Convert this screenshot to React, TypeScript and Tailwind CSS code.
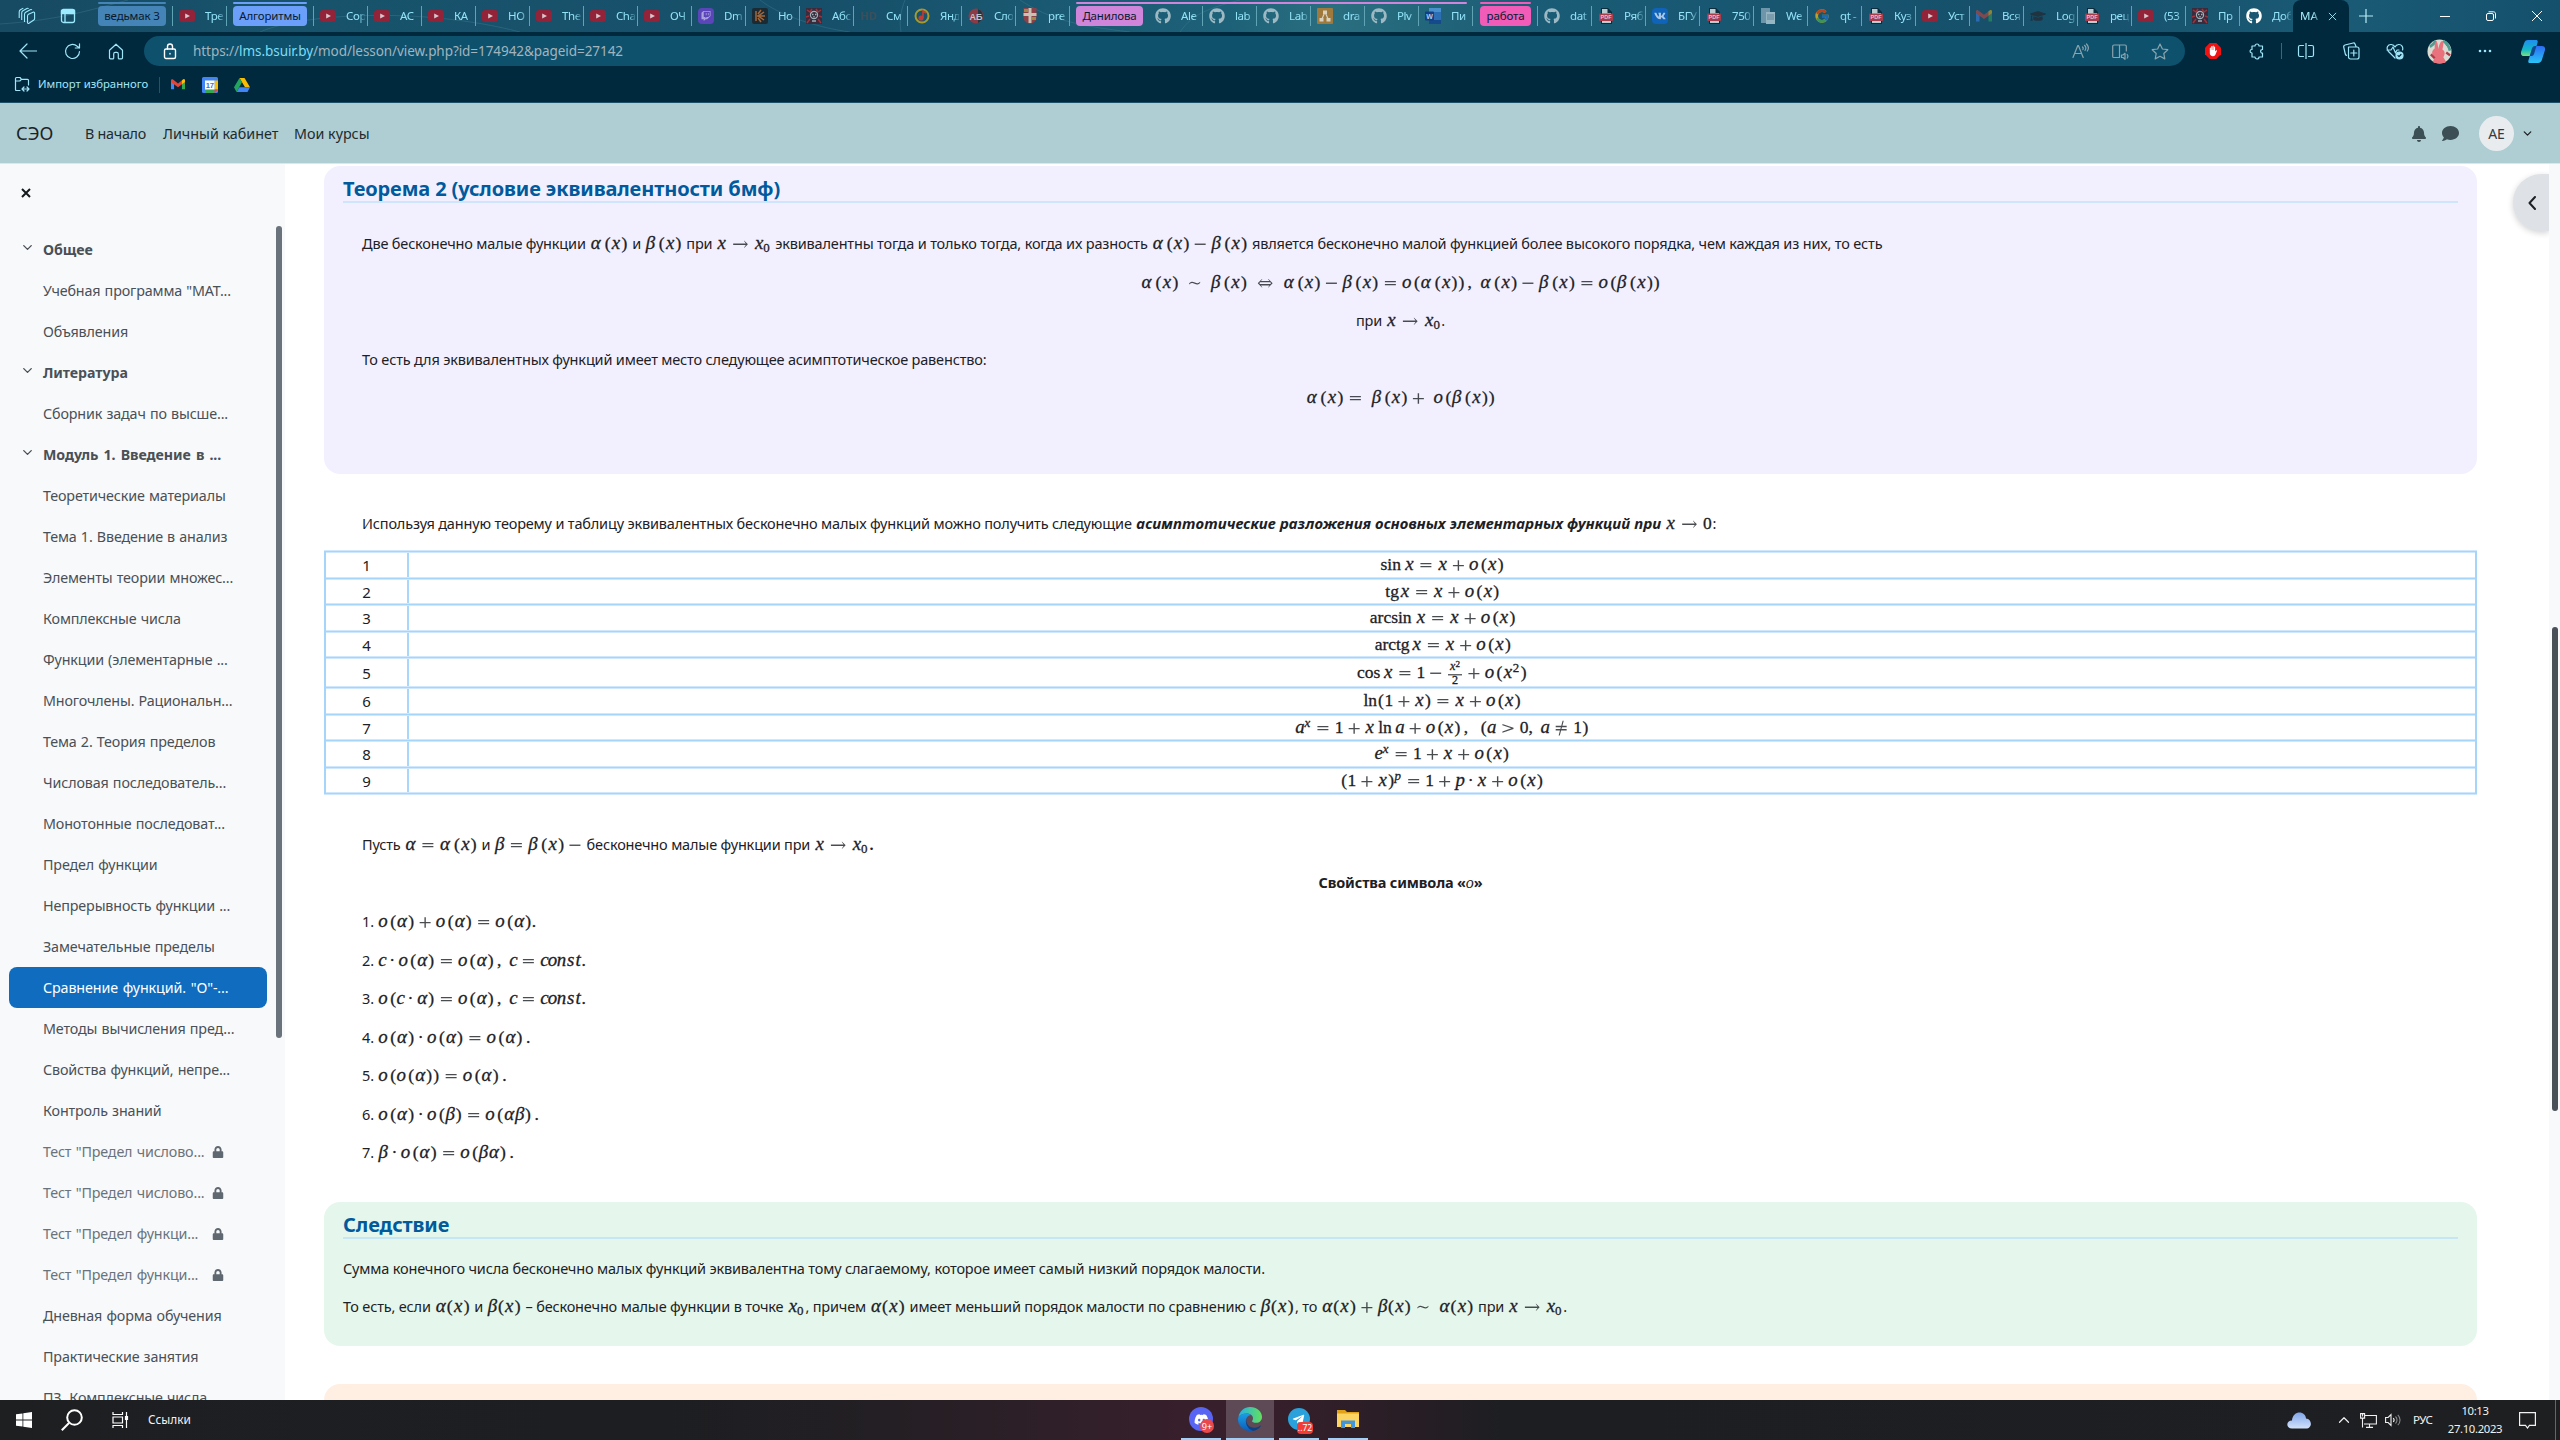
import React from "react";
import type { ReactNode } from "react";
import { FaGithub, FaTwitch, FaVk, FaDiscord, FaTelegramPlane, FaBell, FaComment, FaLock, FaGraduationCap } from "react-icons/fa";
import { FcGoogle } from "react-icons/fc";
import { ChevronDown, ChevronLeft, ChevronUp } from "lucide-react";

/* ---------- Math typesetting ---------- */

const SERIF = "font-['Liberation_Serif'] [-webkit-text-stroke:0.3px_currentColor]";
const SYM = "font-['DejaVu_Math_TeX_Gyre','DejaVu_Sans_Light','DejaVu_Sans'] leading-none opacity-80";

const GLYPHS: Record<string, [string, string]> = {
  "α": ["α", "w-[0.64em] italic"],
  "β": ["β", "w-[0.566em] italic"],
  x: ["x", "w-[0.572em] italic"],
  o: ["o", "w-[0.485em] italic"],
  c: ["c", "w-[0.433em] italic"],
  a: ["a", "w-[0.529em] italic"],
  e: ["e", "w-[0.466em] italic"],
  p: ["p", "w-[0.503em] italic"],
  n: ["n", "w-[0.6em] italic"],
  s: ["s", "w-[0.469em] italic"],
  t: ["t", "w-[0.361em] italic"],
  "0": ["0", "w-[0.5em]"],
  "1": ["1", "w-[0.5em]"],
  "2": ["2", "w-[0.5em]"],
  "(": ["(", "w-[0.389em]"],
  ")": [")", "w-[0.389em]"],
  ",": [",", "w-[0.445em] text-left"],
  ".": [".", "w-[0.278em]"],
  _: ["", "w-[0.167em]"],
  " ": ["", "w-[0.25em]"],
  "·": ["·", "w-[0.722em]"],
  sin: ["sin", "w-[1.395em] pr-[0.167em]"],
  arcsin: ["arcsin", "w-[2.731em] pr-[0.167em]"],
  cos: ["cos", "w-[1.505em] pr-[0.167em]"],
  ln: ["ln", "w-[0.834em]"],
  tg: ["tg", "w-[0.889em]"],
  arctg: ["arctg", "w-[2.225em]"],
};

const RELATIONS: Record<string, [string, string]> = {
  "=": ["=", "w-[1.334em]"],
  "+": ["+", "w-[1.222em]"],
  "−": ["−", "w-[1.222em]"],
  "→": ["→", "w-[1.556em]"],
  "⇔": ["⇔", "w-[1.556em]"],
  "~": ["∼", "w-[1.334em]"],
  ">": [">", "w-[1.334em]"],
  "≠": ["≠", "w-[1.334em]"],
};

const TOKEN = /arcsin|arctg|sin|cos|ln|tg|\^.|FRAC|x0|./gu;

function M({ t }: { t: string }) {
  return (
    <span className={`mx-[0.8px] inline-block text-[17.5px] leading-none font-normal tracking-normal whitespace-nowrap not-italic ${SERIF}`}>
      {(t.match(TOKEN) ?? []).map((k, i) => {
        if (k === "x0")
          return (
            <span key={i} className="inline-block w-[0.96em] pl-[0.05em] italic">
              <span className="text-[1.08em]">x</span><span className="relative top-[0.2em] text-[0.74em] not-italic">0</span>
            </span>
          );
        if (k === "FRAC")
          return (
            <span key={i} className="mx-[0.1em] inline-flex h-[1em] w-[0.84em] translate-y-[0.02em] flex-col items-center justify-center align-middle text-[16px]">
              <span className="text-[0.76em] leading-[0.95em] italic">x<span className="relative -top-[0.3em] text-[0.75em] not-italic">2</span></span>
              <span className="h-px w-full shrink-0 bg-current" />
              <span className="text-[0.76em] leading-[0.95em]">2</span>
            </span>
          );
        if (k[0] === "^")
          return (
            <span key={i} className={`relative -top-[0.45em] inline-block pr-[0.08em] text-[0.74em] ${k[1] === "2" ? "" : "italic"}`}>{k[1]}</span>
          );
        const r = RELATIONS[k];
        if (r)
          return (
            <span key={i} className={`inline-block text-center ${r[1]}`}>
              <span className={`[-webkit-text-stroke:0] ${SYM}`}>{r[0]}</span>
            </span>
          );
        const g = GLYPHS[k] ?? [k, ""];
        return (
          <span key={i} className={`inline-block text-center ${g[1]}`}>
            <span className={g[1].endsWith("italic") ? "text-[1.08em] leading-none" : ""}>{g[0]}</span>
          </span>
        );
      })}
    </span>
  );
}

/* ---------- Browser tabs ---------- */

const YouTube = () => (
  <svg viewBox="0 0 16 12" className="h-3 w-4"><rect width="16" height="12" rx="3" fill="#922338" /><path d="M6.2 3.4 11 6l-4.8 2.6z" fill="#d9c7cc" /></svg>
);
const Pdf = () => (
  <svg viewBox="0 0 16 16" className="size-4"><path d="M3 0h7l4 4v12H3z" fill="#0d2c3c" /><path d="M4 1h5.500v4H13v1H4zM4 13h9v2H4z" fill="#b9ccd2" /><rect x="1" y="5.500" width="14" height="7.500" rx="1" fill="#a83c4a" /><text x="8" y="11.300" textAnchor="middle" fontSize="5.500" fontWeight="700" fontFamily="Liberation Sans" fill="#e3c6ca">PDF</text></svg>
);
const Face = () => (
  <svg viewBox="0 0 16 16" className="size-4"><rect width="16" height="16" fill="#3a2c3c" /><path d="M1 2l3 2 2-3M15 2l-3 2-2-3M0 9l3-1M16 9l-3-1M1 15l3-4M15 15l-3-4" stroke="#a0333c" strokeWidth="1.500" fill="none" /><circle cx="8" cy="7" r="3.600" fill="none" stroke="#9fb0b8" strokeWidth="1.200" /><path d="M6 6.500h1.500M9 6.500h1.500M6 13h4M8 8v1.500" stroke="#9fb0b8" strokeWidth="1.300" /></svg>
);
const Hub = ({ bright }: { bright?: boolean }) => <FaGithub className={bright ? "size-4 text-white" : "size-4 text-[#9db9c4]"} />;
const Gmail = ({ dim }: { dim?: boolean }) => (
  <svg viewBox="0 0 16 12" className={dim ? "h-3 w-4 opacity-50" : "h-[11px] w-3.5"}><path d="M0 1.500v10h3.500V4.500z" fill="#4285f4" /><path d="M16 1.500v10h-3.500V4.500z" fill="#34a853" /><path d="M0 1.500C0 .3 1.300-.3 2.300.4L8 4.800 13.700.4C14.700-.3 16 .3 16 1.500v1.700L8 9 0 3.200z" fill="#ea4335" /><path d="M12.500 1.300 13.700.4C14.700-.3 16 .3 16 1.500v1.700l-3.500 2.500z" fill="#fbbc04" /></svg>
);

type TabItem = { t: string; icon: ReactNode };
const yt = (t: string): TabItem => ({ t, icon: <YouTube /> });
const gh = (t: string): TabItem => ({ t, icon: <Hub /> });
const pdf = (t: string): TabItem => ({ t, icon: <Pdf /> });

const groupB: TabItem[] = [
  yt("Сор"), yt("АС"), yt("КА"), yt("НО"), yt("The"), yt("Cha"), yt("ОЧ"),
  { t: "Dm", icon: <span className="grid size-4 place-items-center rounded-sm bg-[#5a46b8]"><FaTwitch className="size-2.5 text-[#a9a3dd]" /></span> },
  { t: "Ho", icon: <svg viewBox="0 0 16 16" className="size-4"><rect width="16" height="16" rx="2" fill="#1c2b33" /><path d="M4 3v10M5 8h8M6 8l6-4M6 8l6 4M6 6l3-4M6 10l3 4" stroke="#a5683b" strokeWidth="1.500" /></svg> },
  { t: "Абс", icon: <Face /> },
  { t: "См", icon: <span className="text-[11px] font-bold text-[#3b4f5b]">HD</span> },
  { t: "Янд", icon: <svg viewBox="0 0 16 16" className="size-4"><circle cx="8" cy="8" r="6.500" fill="none" stroke="#a89b2e" strokeWidth="2" /><circle cx="7" cy="10" r="2.600" fill="#c03c38" /><path d="M9 10V3l3 2" stroke="#c03c38" strokeWidth="1.600" fill="none" /></svg> },
  { t: "Сло", icon: <svg viewBox="0 0 16 16" className="size-4"><circle cx="8" cy="8" r="7.500" fill="#8b3a46" /><path d="M10 1a7.500 7.500 0 0 1 0 14z" fill="#233642" /><text x="8" y="11.500" textAnchor="middle" fontSize="9" fontWeight="700" fontFamily="Liberation Sans" fill="#b9c6cb">AБ</text></svg> },
  { t: "pre", icon: <svg viewBox="0 0 16 16" className="size-4"><path d="M1.500 0h13v9c0 4-3 6-6.500 7-3.500-1-6.500-3-6.500-7z" fill="#8d4048" /><path d="M6.500 0h3v5h5v3h-5v7h-3V8h-5V5h5z" fill="#c9c2b4" /><path d="M2 1h4v3H2zM10 9h4v3h-4z" fill="#9c8a45" /></svg> },
];
const groupC: TabItem[] = [
  gh("Ale"), gh("lab"), gh("Lab"),
  { t: "dra", icon: <svg viewBox="0 0 16 16" className="size-4"><rect width="16" height="16" rx="1" fill="#a07a3c" /><path d="M8 4 4.500 12M8 4l3.500 8" stroke="#d8d2bf" strokeWidth="1.200" /><path d="M6 2.500h4v3.500H6zM2.500 10h4v3.500h-4zM9.500 10h4v3.500h-4z" fill="#d8d2bf" /></svg> },
  gh("Plv"),
  { t: "Пи", icon: <svg viewBox="0 0 16 16" className="size-4"><rect x="4" width="12" height="16" rx="1" fill="#2c6fb5" /><path d="M4 0h12v4H4z" fill="#4a90cf" /><path d="M4 12h12v4H4z" fill="#154a8c" /><rect y="3.500" width="9" height="9" rx="1" fill="#123f86" /><text x="4.500" y="10.600" textAnchor="middle" fontSize="7" fontWeight="700" fontFamily="Liberation Sans" fill="#b7cbe4">W</text></svg> },
];
const groupD: TabItem[] = [
  gh("dat"), pdf("Ряб"),
  { t: "БГУ", icon: <span className="grid size-4 place-items-center rounded bg-[#0f63b8]"><FaVk className="size-3 text-[#a9c8e6]" /></span> },
  pdf("750"),
  { t: "We", icon: <svg viewBox="0 0 16 16" className="size-4"><path d="M1 0h9v15H1z" fill="#6f95aa" /><path d="M6 4h9v12H6z" fill="#97b6c4" /><path d="M7 7h7M7 9h7M7 11h7" stroke="#5c8297" /></svg> },
  { t: "qt -", icon: <FcGoogle className="size-4 opacity-70" /> },
  pdf("Куз"), yt("Уст"), { t: "Вся", icon: <Gmail dim /> },
  { t: "Log", icon: <FaGraduationCap className="size-4 text-[#1f3340]" /> },
  pdf("рец"), yt("(53"), { t: "Пр", icon: <Face /> }, { t: "Доб", icon: <Hub bright /> },
];

function Tab({ item, sep = true, last }: { item: TabItem; sep?: boolean; last?: boolean }) {
  return (
    <div className={`relative flex h-5 shrink-0 items-center border-[#5fa3b5] ${last ? "w-[55px] border-r" : "w-[54px]"} ${sep ? "border-l pl-[6px]" : "pl-[7px]"}`}>
      <span className="grid w-4 shrink-0 place-items-center">{item.icon}</span>
      <span className="ml-[10px] w-[19px] overflow-hidden text-[11.5px] leading-4 tracking-[-0.4px] whitespace-nowrap text-[#93e2f7] [mask-image:linear-gradient(to_right,black_65%,#0003)]">{item.t}</span>
    </div>
  );
}

function TabRow({ items, firstSep = true, tail }: { items: TabItem[]; firstSep?: boolean; tail?: boolean }) {
  return <>{items.map((it, i) => <Tab key={i} item={it} sep={i > 0 || firstSep} last={tail && i === items.length - 1} />)}</>;
}

function Pill({ label, cls, line }: { label: string; cls: string; line: string }) {
  return (
    <div className={`relative flex h-5 shrink-0 items-center justify-center rounded ${cls}`}>
      <span className={`absolute -top-[4px] left-0 h-0.5 rounded-full ${line}`} />
      <span className="text-[11.5px] tracking-[-0.15px] whitespace-nowrap text-[#0a1a2e]">{label}</span>
    </div>
  );
}

function TabStrip() {
  return (
    <div className="relative flex h-8 items-center bg-[linear-gradient(90deg,#174a63_0%,#18536c_12%,#164f69_32%,#1d6178_48%,#2a6f80_52%,#1a5c75_60%,#16506b_78%,#1a5a74_92%,#14506c_100%)]">
      <svg viewBox="0 0 2560 32" className="absolute inset-0 h-8 w-full" fill="none" stroke="#4f8ea0" strokeOpacity="0.300">
        <path d="M0 24c60-4 90-14 128-24M260 32c40-18 160-26 260 0M760 0c20 16 60 28 90 32M905 0c-4 10-6 20-4 32M1020 0c30 20 60 26 110 32M1180 32c10-14 20-22 60-32" />
      </svg>
      <div className="relative flex w-[98px] shrink-0 items-center text-[#9beafd]">
        <svg viewBox="0 0 18 18" className="ml-[18px] size-[18px]" fill="none" stroke="currentColor" strokeWidth="1.100"><path d="M10.500 7.300 15 5.200c.9-.4 1.600 0 1.600.9v5.600c0 .6-.3 1-.8 1.300L11 16.300c-.8.4-1.500 0-1.500-.9V9c0-.8.3-1.300 1-1.700zM6.500 15V7.500c0-1 .4-1.700 1.200-2.200l4.500-2.600c.8-.4 1.400-.2 1.700.3M3.700 13V6c0-1 .4-1.700 1.200-2.200l4-2.300c.7-.4 1.300-.3 1.700.2M1.200 11V5c0-1 .4-1.700 1.200-2.200L5.300 1.100" /></svg>
        <svg viewBox="0 0 16 16" className="ml-[24px] size-4" fill="none" stroke="currentColor" strokeWidth="1.300"><rect x="1.500" y="1.500" width="13" height="13" rx="2" /><path d="M1.500 2.500h13v3h-13z" fill="currentColor" /><path d="M5 5v9" /></svg>
      </div>
      <Pill label="ведьмак 3" cls="w-[68px] mr-[6px] bg-[#4484b6]" line="w-[68px] bg-[#4484b6]" />
      <TabRow items={[yt("Тре")]} tail />
      <Pill label="Алгоритмы" cls="w-[74px] mx-[6px] bg-[#6b9ffa]" line="w-[74px] bg-[#6b9ffa]" />
      <TabRow items={groupB} tail />
      <Pill label="Данилова" cls="w-[67px] ml-[6px] mr-[5px] bg-[#cf85da]" line="w-[391px] bg-[#cf85da]" />
      <TabRow items={groupC} firstSep={false} tail />
      <Pill label="работа" cls="w-[51px] ml-[7px] mr-[6px] bg-[#f05cb8]" line="w-[51px] bg-[#f05cb8]" />
      <TabRow items={groupD} />
      <div className="relative flex h-8 w-[56px] shrink-0 items-center rounded-t-lg bg-[#00293e] pl-[7px] text-[11.5px] text-[#a5ecfb]">
        <span className="w-[20px] [mask-image:linear-gradient(to_right,black_60%,#0004)]">МА</span>
        <svg viewBox="0 0 10 10" className="ml-[8px] size-[9px]" stroke="currentColor"><path d="m1 1 8 8M9 1 1 9" /></svg>
      </div>
      <svg viewBox="0 0 14 14" className="ml-[10px] size-3.5 shrink-0" stroke="#b9ecf7" strokeWidth="1.200"><path d="M7 0v14M0 7h14" /></svg>
      <div className="relative ml-auto flex items-center gap-[36px] pr-[18px] text-white">
        <svg viewBox="0 0 10 10" className="size-2.5" stroke="currentColor"><path d="M0 5.500h10" /></svg>
        <svg viewBox="0 0 10 10" className="size-2.5" fill="none" stroke="currentColor"><rect x=".5" y="2.500" width="7" height="7" rx="1.500" /><path d="M2.500 .8h5c1.200 0 2 .8 2 2v4.700" /></svg>
        <svg viewBox="0 0 10 10" className="size-2.5" stroke="currentColor"><path d="m0 0 10 10M10 0 0 10" /></svg>
      </div>
    </div>
  );
}

/* ---------- Toolbar ---------- */

const line = { fill: "none", stroke: "currentColor", strokeWidth: 1.2, strokeLinecap: "round" as const, strokeLinejoin: "round" as const };

function Toolbar() {
  return (
    <div className="flex h-[38px] items-center bg-[#00293e] text-[#a0e6f8]">
      <svg viewBox="0 0 18 16" className="ml-[19px] h-4 w-[18px]" {...line}><path d="M17.500 8H1M8 1 1 8l7 7" /></svg>
      <svg viewBox="0 0 17 17" className="ml-[27px] size-[17px]" {...line}><path d="M15.500 8.500a7 7 0 1 1-2.300-5.200L15.500 5M15.500.8V5h-4.200" /></svg>
      <svg viewBox="0 0 16 17" className="ml-[27px] h-[17px] w-4" {...line}><path d="M1.500 7.200 8 1.200l6.500 6v7.600c0 .7-.4 1-1 1h-2.300c-.5 0-.9-.4-.9-.9v-3.800c0-1-.6-1.700-1.500-1.700h-1.600c-.9 0-1.500.7-1.500 1.700v3.800c0 .5-.4.9-.9.9H2.500c-.6 0-1-.3-1-1z" /></svg>
      <div className="ml-[20px] flex h-[30px] w-[2041px] items-center rounded-full bg-[#0d516d]">
        <svg viewBox="0 0 14 17" className="ml-[19px] h-[17px] w-3.5 text-white" {...line} strokeWidth="1.400"><rect x="1.500" y="6" width="11" height="9.500" rx="1.500" /><path d="M4.500 6V3.500a2.500 2.500 0 0 1 5 0V6M7 10.500v.6" /></svg>
        <span className="ml-[16px] text-[13.5px] tracking-[-0.06px] text-[#a3b4bd]">https://<span className="text-[#7fdcf3]">lms.bsuir.by</span>/mod/lesson/view.php?id=174942&amp;pageid=27142</span>
        <div className="ml-auto mr-[16px] flex items-center gap-[22px] text-[#8ba3ad]">
          <svg viewBox="0 0 17 16" className="h-4 w-[17px]" {...line}><path d="M1 14.500 5.800 2.500h.6l4.800 12M2.700 10.500h7M10.500 4c.8.7.8 1.800.4 2.600M12.500 2.300c1.500 1.400 1.500 3.800.5 5.200M14.500 1c2 2 2.200 5 .8 7" /></svg>
          <svg viewBox="0 0 18 17" className="h-[17px] w-[18px]" {...line}><path d="M8.500 2v12.500M8.500 2H3c-.8 0-1.300.5-1.300 1.200v10.200c0 .6.4 1.100 1.200 1.100h5.600M8.500 2H14c.8 0 1.300.5 1.300 1.200V8M10.500 12v2.500h1.500l2 1.800v-6L12 12zM16.200 11.500c.8 1 .8 2.500 0 3.500" /></svg>
          <svg viewBox="0 0 18 17" className="h-[17px] w-[18px]" {...line}><path d="m9 1 2.400 5 5.400.7-4 3.800 1 5.400L9 13.300l-4.800 2.600 1-5.400-4-3.800 5.400-.7z" /></svg>
        </div>
      </div>
      <svg viewBox="0 0 16 16" className="ml-[20px] size-4"><path d="M4.700 0h6.600L16 4.700v6.600L11.300 16H4.700L0 11.300V4.700z" fill="#f01111" /><path d="M4.800 8.500V5.200c0-.8 1.100-.8 1.100 0V7h.3V3.700c0-.8 1.100-.8 1.100 0V7h.3V3.200c0-.8 1.100-.8 1.100 0V7H9V4c0-.8 1.100-.8 1.100 0v4.500l.8-1c.4-.6 1.300-.2 1 .5L10.500 11.500c-.5 1.200-1.200 1.700-2.500 1.700-2 0-3.200-1.400-3.200-3z" fill="#fff" /></svg>
      <svg viewBox="0 0 16 17" className="ml-[28px] h-[17px] w-4" {...line}><path d="M3 4h3a2 2 0 1 1 4 0h3.500v3.500c-2.500-.3-2.500 4 0 3.500V15H10a2 2 0 1 1-4 0H3v-4c-2.500 0-2.500-3.800 0-3.500z" transform="translate(0 -1)" /></svg>
      <span className="ml-[16px] h-4 w-px bg-[#37687c]" />
      <svg viewBox="0 0 18 16" className="ml-[15px] h-4 w-[18px]" {...line}><path d="M9 0v16M6.500 2.500H3c-1 0-1.500.5-1.500 1.500v8c0 1 .5 1.500 1.500 1.500h3.500M11.500 2.500H15c1 0 1.500.5 1.500 1.500v8c0 1-.5 1.500-1.500 1.500h-3.500" /></svg>
      <svg viewBox="0 0 18 18" className="ml-[27px] size-[18px]" {...line}><path d="M14 4.500 13 2c-.3-.8-1-1.200-1.800-1L3 3c-1 .3-1.500 1-1.300 2l1.600 7c.2.800.6 1.200 1.200 1.400M6.500 5h8.500c1.200 0 2 .8 2 2v8c0 1.200-.8 2-2 2H8.500c-1.200 0-2-.8-2-2zM11.800 8v6M8.800 11h6" /></svg>
      <svg viewBox="0 0 18 17" className="ml-[26px] h-[17px] w-[18px]" {...line}><path d="M9 15 2.500 8.500C-.5 5 2 1.200 5.300 1.500 7.200 1.700 8.400 2.800 9 4c.6-1.200 1.800-2.300 3.700-2.500C15.500 1.300 17.500 4 16.500 7M1 7h4l2-3 2.500 6 1.500-3h2" /><circle cx="13.500" cy="12.500" r="3.500" fill="currentColor" /><path d="m12 12.700 1 1 2-2.200" stroke="#00293e" /></svg>
      <svg viewBox="0 0 26 26" className="ml-[23px] size-[25px]"><circle cx="13" cy="13" r="12.500" fill="#d8dcd2" /><path d="M3 8c4-2 6-6 6-6M17 2c3 2 6 6 7 10" stroke="#4f9c92" strokeWidth="3" /><path d="M8 5c0-3 3-3 3 0l1 6c0-4 2-9 4-9s1 5 0 9c3 2 3 5 1 8l3 5c-4 2-10 2-14 0l2-5c-4-3-3-7 0-9z" fill="#e8737c" /><path d="M4 16l4 4M20 14l4 3" stroke="#b43a48" strokeWidth="2.500" /></svg>
      <svg viewBox="0 0 14 4" className="ml-[26px] h-1 w-3.5" fill="currentColor"><circle cx="2" cy="2" r="1.300" /><circle cx="7" cy="2" r="1.300" /><circle cx="12" cy="2" r="1.300" /></svg>
      <svg viewBox="0 0 24 23" className="ml-[29px] h-[23px] w-6"><defs><linearGradient id="cpa" x1="0" y1="0" x2="0" y2="1"><stop offset="0" stopColor="#1f8df0" /><stop offset=".6" stopColor="#13b9c9" /><stop offset="1" stopColor="#7be07c" /></linearGradient><linearGradient id="cpb" x1="0" y1="0" x2="0" y2="1"><stop offset="0" stopColor="#2b6cf5" /><stop offset="1" stopColor="#29c5f6" /></linearGradient></defs><path d="M7 0h8c1.500 0 2 1 1.600 2.500L13 14c-.5 1.500-1.500 2-3 2H3c-2.500 0-3.500-2-3-4L3 3.500C3.700 1 5 0 7 0z" fill="url(#cpa)" /><path d="M14 6h7c2.500 0 3.500 2 3 4l-3 9.500c-.6 2-2 3.500-4 3.500H9c-1.500 0-2-1-1.600-2.500L11 8.500C11.500 7 12.500 6 14 6z" fill="url(#cpb)" /><path d="M11 8.500C11.500 7 12.500 6 14 6h1.400L13 14c-.5 1.500-1.500 2-3 2H8.700z" fill="#0c4a8c" /></svg>
    </div>
  );
}

function Favorites() {
  return (
    <div className="flex h-[32px] items-center border-b border-[#1c5068] bg-[#00293e] text-[#a0e6f8]">
      <svg viewBox="0 0 16 16" className="ml-[14px] mt-[-5px] size-4" {...line}><path d="M6 14.500H2.500c-.7 0-1-.4-1-1v-11c0-.6.3-1 1-1H6l1.500 1.800h6c.7 0 1 .4 1 1V9M1.500 5h4.300l1.700-1.700M8 13h7M10 11l-2 2 2 2M13 11l2 2-2 2" /></svg>
      <span className="ml-[8px] mt-[-5px] text-[11.3px] whitespace-nowrap">Импорт избранного</span>
      <span className="ml-[11px] mt-[-4px] h-4 w-px bg-[#2d5163]" />
      <span className="ml-[11px] mt-[-4px]"><Gmail /></span>
      <svg viewBox="0 0 16 16" className="ml-[17px] mt-[-4px] size-4"><rect width="16" height="16" rx="1.500" fill="#4285f4" /><path d="M12.500 3.500H16v9h-3.500z" fill="#fbbc04" /><path d="M3 12.500h9.500V16H3z" fill="#34a853" /><path d="M12.500 12.500H16L12.500 16z" fill="#ea4335" /><rect x="3" y="3.500" width="9.500" height="9" fill="#fff" /><text x="7.800" y="10.800" textAnchor="middle" fontSize="7.500" fontWeight="700" fontFamily="Liberation Sans" fill="#3a73e0">17</text></svg>
      <svg viewBox="0 0 16 14" className="ml-[16px] mt-[-4px] h-3.5 w-4"><path d="M5.500 0h5L16 9.300h-5z" fill="#fbbc04" /><path d="M5.500 0 8 4.300 2.500 14 0 9.300z" fill="#22a45d" /><path d="M5.300 9.300H16L13.500 14h-11z" fill="#4285f4" /></svg>
    </div>
  );
}

/* ---------- Site header ---------- */

function SiteHeader() {
  return (
    <header className="flex h-[61px] shrink-0 items-center border-b border-[#dbe8ea] bg-[#aeced3] pt-px text-[14.3px] text-[#1f2a2e]">
      <span className="ml-[16px] w-[69px] text-[18.2px] text-[#1d2125]">СЭО</span>
      <span className="w-[78px] tracking-[-0.25px] whitespace-nowrap">В начало</span>
      <span className="w-[131px] whitespace-nowrap">Личный кабинет</span>
      <span className="whitespace-nowrap">Мои курсы</span>
      <div className="ml-auto flex items-center text-[#3b4f54]">
        <FaBell className="h-[16px] w-[16px]" />
        <FaComment className="ml-[15px] size-[17px]" />
        <span className="ml-[20px] grid size-[35px] place-items-center rounded-full bg-[#e9ecef] text-[14px] text-[#343a40]">АЕ</span>
        <ChevronDown className="mr-[26px] ml-[7px] size-[13px] text-[#1d2125]" strokeWidth={2.4} />
      </div>
    </header>
  );
}

/* ---------- Sidebar ---------- */

type NavItem = { t: string; kind?: "section" | "active" | "locked" };
const nav: NavItem[] = [
  { t: "Общее", kind: "section" },
  { t: 'Учебная программа "МАТ...' },
  { t: "Объявления" },
  { t: "Литература", kind: "section" },
  { t: "Сборник задач по высше..." },
  { t: "Модуль 1. Введение в ...", kind: "section" },
  { t: "Теоретические материалы" },
  { t: "Тема 1. Введение в анализ" },
  { t: "Элементы теории множес..." },
  { t: "Комплексные числа" },
  { t: "Функции (элементарные ..." },
  { t: "Многочлены. Рациональн..." },
  { t: "Тема 2. Теория пределов" },
  { t: "Числовая последователь..." },
  { t: "Монотонные последоват..." },
  { t: "Предел функции" },
  { t: "Непрерывность функции ..." },
  { t: "Замечательные пределы" },
  { t: 'Сравнение функций. "О"-...', kind: "active" },
  { t: "Методы вычисления пред..." },
  { t: "Свойства функций, непре..." },
  { t: "Контроль знаний" },
  { t: 'Тест "Предел числово...', kind: "locked" },
  { t: 'Тест "Предел числово...', kind: "locked" },
  { t: 'Тест "Предел функци...', kind: "locked" },
  { t: 'Тест "Предел функци...', kind: "locked" },
  { t: "Дневная форма обучения" },
  { t: "Практические занятия" },
  { t: "ПЗ. Комплексные числа" },
];

function NavRow({ item }: { item: NavItem }) {
  const tone =
    item.kind === "section" ? "font-bold text-[14.2px] tracking-[-0.05px] [word-spacing:1.5px] text-[#495057]"
    : item.kind === "active" ? "bg-[#0f6cbf] text-white text-[14.3px] tracking-[-0.12px] [word-spacing:1.2px]"
    : item.kind === "locked" ? "text-[#6a737b] text-[14.3px] tracking-[-0.15px] [word-spacing:0.8px]"
    : "text-[#495057] text-[14.3px] tracking-[-0.13px] [word-spacing:0.6px]";
  return (
    <div className={`ml-[9px] flex h-[41px] w-[258px] shrink-0 items-center rounded-lg whitespace-nowrap ${tone}`}>
      <span className="flex w-[34px] shrink-0 pl-[11px]">{item.kind === "section" && <ChevronDown className="-mt-1 size-[15px]" strokeWidth={2.2} />}</span>
      <span className={item.kind === "locked" ? "w-[169px]" : ""}>{item.t}</span>
      {item.kind === "locked" && <FaLock className="size-[12px] text-[#5f6870]" />}
    </div>
  );
}

function Sidebar() {
  return (
    <aside className="flex w-[285px] shrink-0 flex-col overflow-hidden bg-[#f8f9fa]">
      <div className="flex h-[65px] shrink-0 items-start pt-[24px] pl-[21px]">
        <svg viewBox="0 0 10 10" className="size-[10px]" stroke="#16191c" strokeWidth="2"><path d="m1 1 8 8M9 1 1 9" /></svg>
      </div>
      <div className="flex min-h-0 flex-1">
        <div className="flex w-[276px] flex-col">{nav.map((n, i) => <NavRow key={i} item={n} />)}</div>
        <div className="-mt-[3px] h-[812px] w-[6px] rounded-full bg-[#6a737b]" />
      </div>
    </aside>
  );
}

/* ---------- Lesson ---------- */

const P = ({ children, center, bold }: { children: ReactNode; center?: boolean; bold?: boolean }) => (
  <p className={`mb-4 h-[22.5px] text-[14.5px] leading-[21px] tracking-[-0.17px] whitespace-nowrap ${center ? "text-center" : ""} ${bold ? "-mt-px mb-[17px] font-bold" : ""}`}>{children}</p>
);

const Heading = ({ children, tone }: { children: ReactNode; tone: string }) => (
  <h3 className={`h-[37px] border-b-2 pt-[10px] text-[20px] leading-[26px] font-bold tracking-[-0.11px] text-[#005a9c] ${tone}`}>{children}</h3>
);

const rows: [string, string][] = [
  ["sinx=x+o_(x)", "h-[26px]"],
  ["tgx=x+o_(x)", "h-[25px]"],
  ["arcsinx=x+o_(x)", "h-[26px]"],
  ["arctgx=x+o_(x)", "h-[25px]"],
  ["cosx=1−FRAC+o_(x^2)", "h-[29px]"],
  ["ln(1+x)=x+o_(x)", "h-[26px]"],
  ["a^x=1+x_ln_a+o_(x)_,  (a>0, a≠1)", "h-[25px]"],
  ["e^x=1+x+o_(x)", "h-[26px]"],
  ["(1+x)^p=1+p·x+o_(x)", "h-[25px]"],
];

const props: string[] = [
  "o_(α)+o_(α)=o_(α).",
  "c·o_(α)=o_(α)_, c=const.",
  "o_(c·α)=o_(α)_, c=const.",
  "o_(α)·o_(α)=o_(α)_.",
  "o_(o_(α))=o_(α)_.",
  "o_(α)·o_(β)=o_(αβ)_.",
  "β·o_(α)=o_(βα)_.",
];

function Lesson() {
  return (
    <main className="ml-[39px] flex w-[2153px] shrink-0 flex-col overflow-hidden pt-[2px] text-[#1d2125]">
      <section className="h-[308px] shrink-0 rounded-2xl bg-[#f2f0ff] px-[19px]">
        <Heading tone="border-[#cfe5fc]">Теорема 2 (условие эквивалентности бмф)</Heading>
        <div className="mt-[30px] px-[19px]">
          <P>Две бесконечно малые функции <M t="α_(x)" /> и <M t="β_(x)" /> при <M t="x→x0" /> эквивалентны тогда и только тогда, когда их разность <M t="α_(x)−β_(x)" /> является бесконечно малой функцией более высокого порядка, чем каждая из них, то есть</P>
          <P center><M t="α_(x) ~ β_(x) ⇔ α_(x)−β_(x)=o_(α_(x))_, α_(x)−β_(x)=o_(β_(x))" /></P>
          <P center>при <M t="x→x0" />.</P>
          <P>То есть для эквивалентных функций имеет место следующее асимптотическое равенство:</P>
          <P center><M t="α_(x)= β_(x)+ o_(β_(x))" /></P>
        </div>
      </section>

      <div className="mt-[39px] px-[38px]">
        <P>Используя данную теорему и таблицу эквивалентных бесконечно малых функций можно получить следующие <span className="ml-px text-[15px] font-bold tracking-[0.1px] italic">асимптотические разложения основных элементарных функций при</span> <M t="x→0" />:</P>
      </div>

      <div className="-mt-[1.500px] grid shrink-0 gap-px border-y border-[#d0e8fd] bg-[#a5d5fb] px-[2px] py-px">
        {rows.map(([f, h], i) => (
          <div key={i} className={`grid grid-cols-[81px_2px_1fr] items-center border-y border-[#d0e8fd] bg-white text-center ${h}`}>
            <span className="text-[15px] leading-5">{i + 1}</span>
            <span className="h-full bg-[#a9d7fb]" />
            <span className="-mt-px text-[15px] leading-5"><M t={f} /></span>
          </div>
        ))}
      </div>

      <div className="mt-[39px] px-[38px]">
        <P>Пусть <M t="α=α_(x)" /> и <M t="β=β_(x)−" />бесконечно малые функции при <M t="x→x0" /><b>.</b></P>
        <P center bold>Свойства символа «<span className="font-['Liberation_Serif'] text-[16px] leading-none font-normal italic">o</span>»</P>
        {props.map((f, i) => <P key={i}>{i + 1}. <M t={f} /></P>)}
      </div>

      <section className="mt-[21px] h-[144px] shrink-0 rounded-2xl bg-[#e5f7ec] px-[19px]">
        <Heading tone="border-[#c6e6f4]">Следствие</Heading>
        <div className="mt-[19px]">
          <P>Сумма конечного числа бесконечно малых функций эквивалентна тому слагаемому, которое имеет самый низкий порядок малости.</P>
          <P>То есть, если <M t="α(x)" /> и <M t="β(x)" /> – бесконечно малые функции в точке <M t="x0" />, причем <M t="α(x)" /> имеет меньший порядок малости по сравнению с <M t="β(x)" />, то <M t="α(x)+β(x)~ α(x)" /> при <M t="x→x0" />.</P>
        </div>
      </section>

      <section className="mt-[38px] h-[60px] shrink-0 rounded-t-2xl bg-[#ffefe2]" />
    </main>
  );
}

function RightRail() {
  return (
    <div className="flex flex-1 justify-end">
      <div className="mt-[10px] flex h-[57px] w-[36px] items-center justify-center rounded-l-full bg-[#dee2e6] pl-px shadow-[0_2px_6px_rgba(0,0,0,0.180)]">
        <svg viewBox="0 0 8 14" className="h-[14px] w-2" fill="none" stroke="#1d2125" strokeWidth="2" strokeLinecap="round" strokeLinejoin="round"><path d="M7 1 1.500 7 7 13" /></svg>
      </div>
      <div className="h-full w-[11px] bg-[#f8f9fb] pt-[463px]">
        <div className="ml-[3px] h-[484px] w-[6px] rounded-full bg-[#495057]" />
      </div>
    </div>
  );
}

/* ---------- Taskbar ---------- */

function Tile({ children, cls }: { children: ReactNode; cls: string }) {
  return <div className={`relative flex h-10 items-center justify-center border-b-2 border-[#9fd0f7] ${cls}`}>{children}</div>;
}

function Taskbar() {
  return (
    <footer className="flex h-10 shrink-0 items-center bg-[linear-gradient(90deg,#1d1f21_0%,#1c1e21_25%,#231f24_34%,#371f2b_46%,#371f2b_49%,#2b1e26_54%,#1c1e22_59%,#1d1f21_100%)] text-[#f1f1f1]">
      <div className="flex w-[1181px] items-center">
        <svg viewBox="0 0 16 16" className="ml-[16px] size-4" fill="#fff"><path d="M0 2.300 6.500 1.400v6.200H0zM7.300 1.300 16 0v7.600H7.300zM0 8.400h6.500v6.200L0 13.700zM7.300 8.400H16V16l-8.700-1.200z" /></svg>
        <svg viewBox="0 0 22 22" className="ml-[29px] size-[22px]" fill="none" stroke="#fff" strokeWidth="2"><circle cx="13.500" cy="8.500" r="7.300" /><path d="M8 14 .8 21.200" /></svg>
        <svg viewBox="0 0 17 16" className="ml-[29px] h-4 w-[17px]" fill="none" stroke="#fff" strokeWidth="1.200"><path d="M1 0v2.500h9.500V0M1 16v-2.500h9.500V16M1 5h9.500v6H1zM14.500 0v4M14.500 8v8" /><path d="M13.500 4.500h2v3h-2z" fill="#fff" /></svg>
        <span className="ml-[19px] text-[11.8px]">Ссылки</span>
      </div>
      <Tile cls="w-[40px]">
        <span className="grid size-6 place-items-center rounded-full bg-[#5865f2]"><FaDiscord className="size-[15px] text-white" /></span>
        <span className="absolute top-[19px] left-[19px] grid h-[14px] w-[14px] place-items-center rounded-full bg-[#e9494c] text-[9px] leading-none text-white">9+</span>
      </Tile>
      <Tile cls="ml-[5px] w-[48px] bg-[#5d4a56]">
        <svg viewBox="0 0 24 24" className="size-6"><defs><linearGradient id="ea" x1="0" y1="0" x2="1" y2="0"><stop offset="0" stopColor="#25b0e8" /><stop offset="1" stopColor="#63e05c" /></linearGradient><linearGradient id="eb" x1="0" y1="0" x2="0" y2="1"><stop offset="0" stopColor="#1a9fe6" /><stop offset="1" stopColor="#0b5cba" /></linearGradient></defs><path d="M.5 10C1.500 4 6.500 0 12 0c7 0 12 4.800 12 10 0 3.500-2.600 5.800-5.800 5.800-2.500 0-4.200-.9-4.200-1.600 0-.6 1-1 1-3C15 8.500 12 6.500 8.500 6.500 5 6.500 2 8 .5 10z" fill="url(#ea)" /><path d="M.5 10C2 8 5 6.500 8 6.500c2 0 3.500.5 4.800 1.500C9.500 8.500 8 11 8 14c0 4.500 3.500 8.500 7 9.600C7.500 25.500 0 20 0 12.500c0-.9.200-1.700.5-2.500z" fill="url(#eb)" /><path d="M8.500 11C7 17.500 12.500 22 18.500 20.500c1.500-.4 2.800-1.200 3.500-1.800.6-.4 1 .1.700.6C20.500 22.500 17 24 14.500 23.700 9.500 22 6.500 15.500 8.500 11z" fill="#0d3f86" /></svg>
      </Tile>
      <Tile cls="ml-[5px] w-[40px]">
        <span className="grid size-[22px] place-items-center rounded-full bg-[#2aa1da]"><FaTelegramPlane className="mr-[2px] size-[13px] text-white" /></span>
        <span className="absolute top-[22px] left-[18px] grid h-[12px] w-[16px] place-items-center rounded-sm bg-[#f23c34] text-[8.5px] leading-none text-white">..72</span>
      </Tile>
      <Tile cls="ml-[9px] w-[40px]">
        <svg viewBox="0 0 22 18" className="h-[18px] w-[22px]"><path d="M0 0h8l2 2h12v3H0z" fill="#e0a218" /><path d="M0 3.500h22V17H0z" fill="#fcd462" /><path d="M4 18v-7.500h14V18h-4v-4H8v4z" fill="#3f96dc" /></svg>
      </Tile>
      <div className="ml-auto flex items-center">
        <svg viewBox="0 0 24 17" className="h-[17px] w-6"><defs><linearGradient id="cl" x1="0" y1="0" x2="0" y2="1"><stop offset="0" stopColor="#7fa5ea" /><stop offset="1" stopColor="#d3e2fb" /></linearGradient></defs><path d="M5 16.500c-6 0-6.500-8 0-8C5.500 3 9 .5 12.500.5S18.800 3 19 6.500c6.500.5 6.500 10 0 10z" fill="url(#cl)" /></svg>
        <ChevronUp className="ml-[24px] size-[18px]" strokeWidth={1.6} />
        <svg viewBox="0 0 17 15" className="ml-[7px] h-[15px] w-[17px]" fill="none" stroke="currentColor" strokeWidth="1.100"><path d="M5 2.500h11.400v8.500H4M9.500 11v3M6 14.400h7M2.500 5v9.500M.6.600h4v4.500h-4zM2.600 1v2.500" /></svg>
        <svg viewBox="0 0 17 14" className="ml-[8px] h-[14px] w-[17px]" fill="none" stroke="currentColor" strokeWidth="1.100"><path d="M.6 4.500h2.500L6 1.500v11L3.100 9.500H.6zM8.300 5c1 1.200 1 2.800 0 4" /><path d="M10.500 3.500c2 2 2 5 0 7M12.800 1.800c3 3 3 7.400 0 10.400" strokeOpacity="0.500" /></svg>
        <span className="ml-[11px] w-[23px] text-[11.5px] tracking-[-0.4px]">РУС</span>
        <div className="ml-[10px] w-[58px] text-center text-[11.3px] leading-[18px] tracking-[-0.35px]"><div>10:13</div><div>27.10.2023</div></div>
        <svg viewBox="0 0 17 17" className="ml-[15px] h-[17px] w-[17px]" fill="none" stroke="currentColor" strokeWidth="1.200"><path d="M.6.600h15.800v12.800h-6L8.500 16l-2-2.600H.6z" /></svg>
        <span className="ml-[19px] mr-1 h-10 w-px bg-[#63666a]" />
      </div>
    </footer>
  );
}

export default function App() {
  return (
    <div className="flex h-[1440px] w-[2560px] flex-col overflow-hidden bg-white font-['Noto_Sans','Open_Sans',sans-serif]">
      <TabStrip />
      <Toolbar />
      <div className="h-px shrink-0 bg-[#00293e]" />
      <Favorites />
      <SiteHeader />
      <div className="flex min-h-0 flex-1">
        <Sidebar />
        <Lesson />
        <RightRail />
      </div>
      <Taskbar />
    </div>
  );
}
